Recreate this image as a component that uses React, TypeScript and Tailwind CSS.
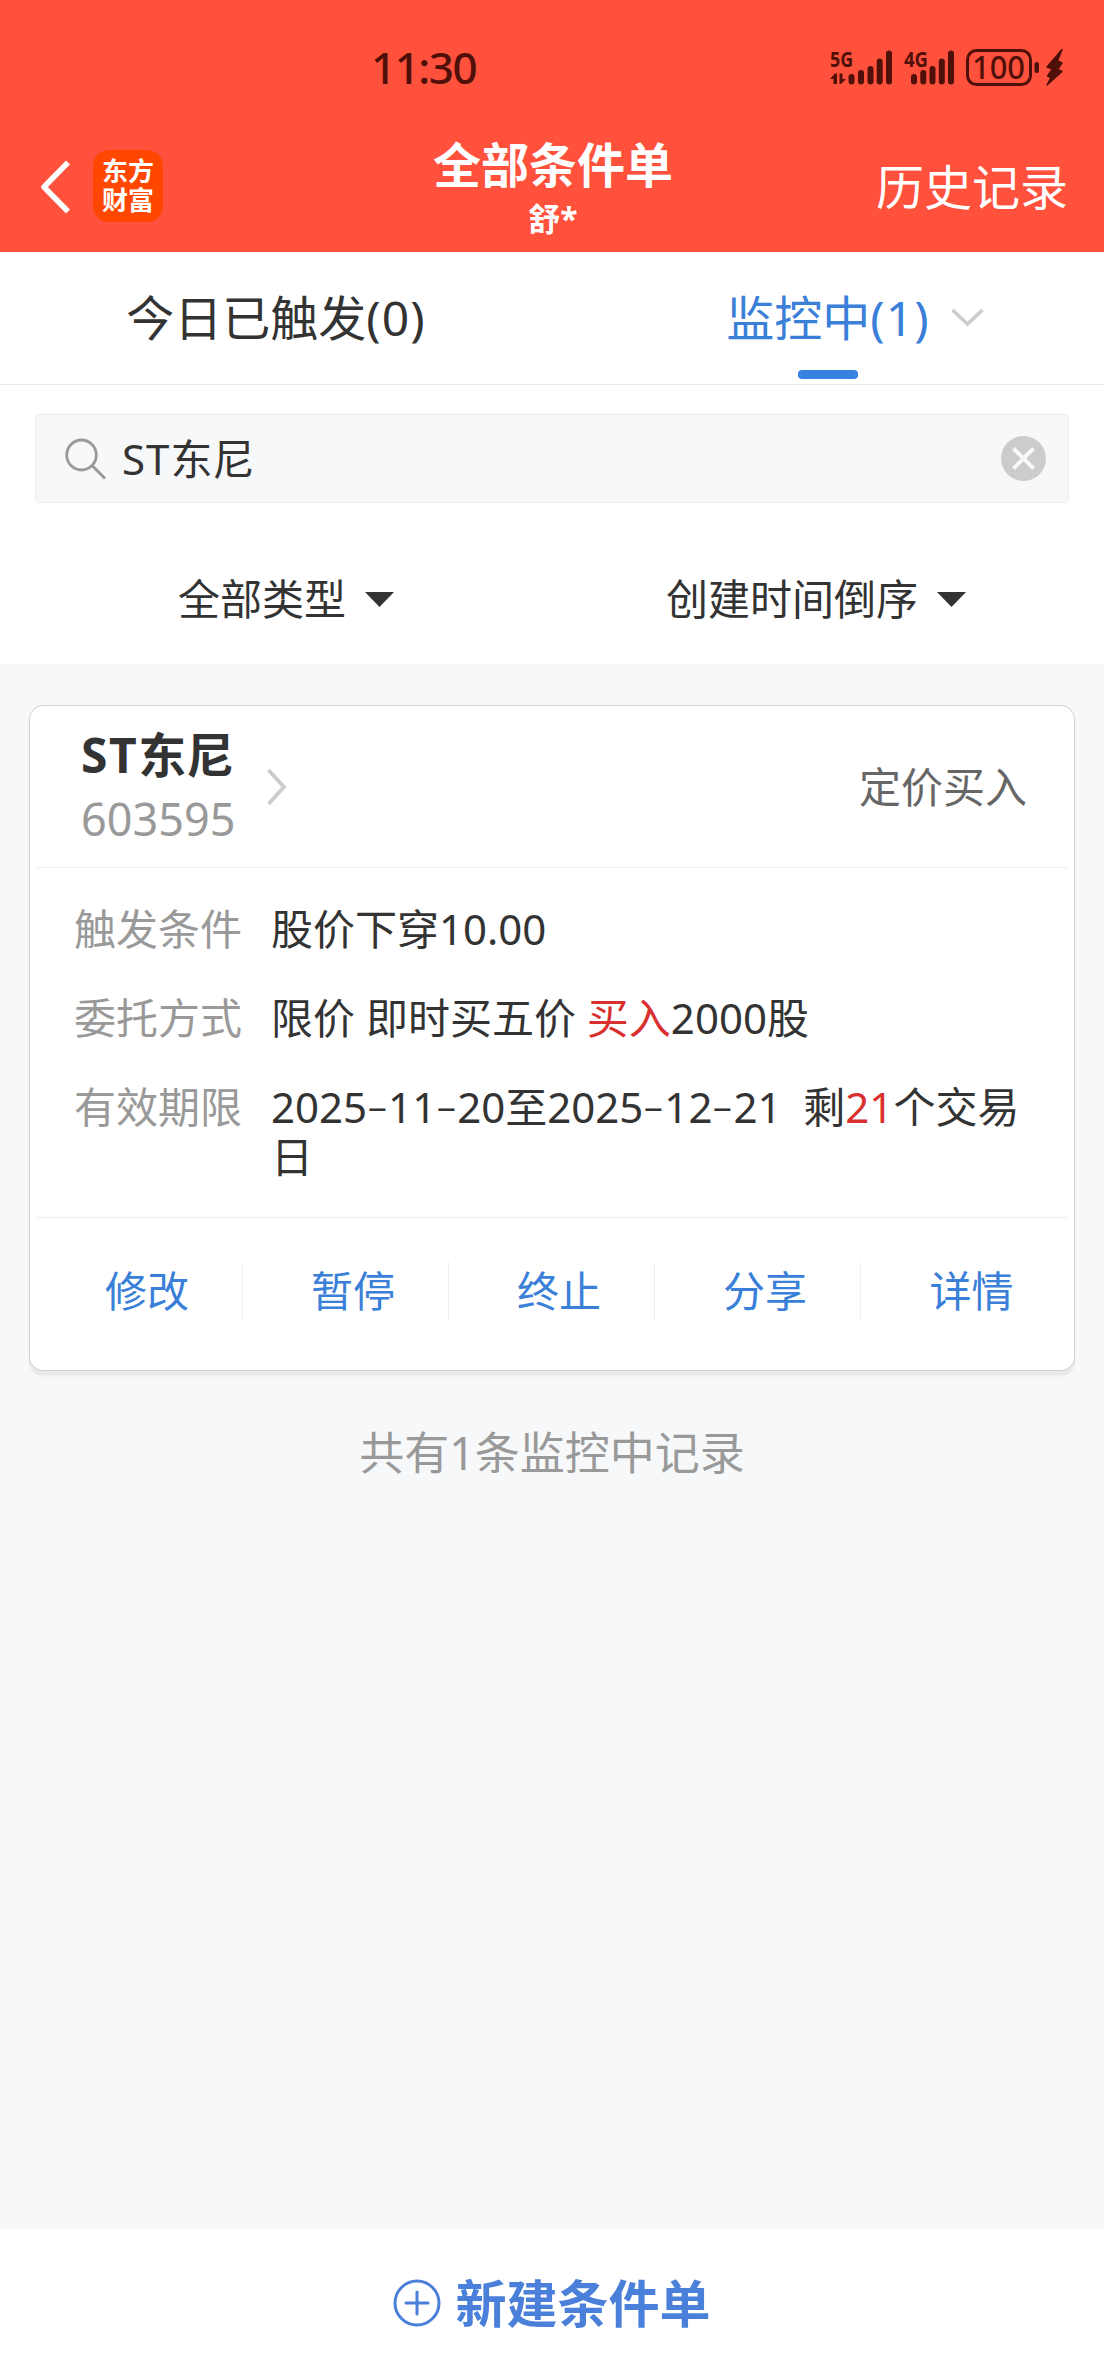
import { useState } from 'react';

const tabs = [
  { key: 'triggered', label: '今日已触发', count: 0 },
  { key: 'watching', label: '监控中', count: 1 },
];

const actions = ['修改', '暂停', '终止', '分享', '详情'];

function StatusIcons() {
  return (
    <svg className="w-[240px] h-[56px]" viewBox="828 40 240 56" fill="#4f1009">
      {/* 5G signal */}
      <text x="830" y="67" fontSize="22" fontWeight="700" textLength="23" lengthAdjust="spacingAndGlyphs">5G</text>
      <path d="M830 79 L835 73.5 H837 V84 H833.5 V79 Z M839.5 73.5 H842.5 V79 H846 L841 84 H839.5 Z" />
      <rect x="848.5" y="74" width="6" height="10.5" rx="3" />
      <rect x="858" y="70" width="6" height="14.5" rx="3" />
      <rect x="867.5" y="66" width="6" height="18.5" rx="3" />
      <rect x="876.7" y="58.5" width="6" height="26" rx="3" />
      <rect x="886" y="50.5" width="6" height="34" rx="3" />
      {/* 4G signal */}
      <text x="904" y="67" fontSize="22" fontWeight="700" textLength="24" lengthAdjust="spacingAndGlyphs">4G</text>
      <rect x="911" y="74" width="6" height="10.5" rx="3" />
      <rect x="920.3" y="70" width="6" height="14.5" rx="3" />
      <rect x="929.5" y="66" width="6" height="18.5" rx="3" />
      <rect x="938.8" y="58.5" width="6" height="26" rx="3" />
      <rect x="948" y="50.5" width="6" height="34" rx="3" />
      {/* battery */}
      <rect x="967.5" y="50.5" width="63" height="34" rx="9" fill="none" stroke="#4f1009" strokeWidth="3" />
      <text x="972" y="79" fontSize="32" fontWeight="500" textLength="53" lengthAdjust="spacingAndGlyphs">100</text>
      <rect x="1034.5" y="62" width="4.5" height="11" rx="2.2" />
      <path d="M1062 49.5 L1047 67 L1052.5 69 L1047.5 76 L1051 77.5 L1047 85 L1062 71.500 L1057.5 69.5 L1062 63 L1057.5 61 Z" stroke="#4f1009" strokeWidth="1.500" strokeLinejoin="round" />
    </svg>
  );
}

function Header() {
  return (
    <header className="h-[252px] bg-[#ff513c] text-white">
      <div className="h-[120px] flex items-start justify-between pl-[371px] pr-[36px] pt-[40px]">
        <span className="pt-[6px] text-[44px] leading-[42px] tracking-[-1.5px] font-medium text-[#4f1009]">11:30</span>
        <StatusIcons />
      </div>
      <div className="h-[132px] grid grid-cols-[1fr_auto_1fr] pl-[38px] pr-[36px]">
        <div className="flex items-start gap-[20px] pt-[30px]">
          <svg className="w-[35px] h-[74px]" viewBox="0 0 35 74" fill="none" stroke="#fff" strokeWidth="5.500">
            <path d="M30 12.500 L6 37 L30 61.500" strokeLinejoin="round" />
          </svg>
          <div className="w-[70px] h-[72px] rounded-[16px] bg-[#ff4700] pt-[7px] text-center text-[26px] leading-[29px] font-bold">
            <div>东方</div>
            <div>财富</div>
          </div>
        </div>
        <div className="text-center font-bold pt-[19px]">
          <h1 className="text-[48px] leading-[52px]">全部条件单</h1>
          <p className="text-[32px] leading-[36px] pt-[10px]">舒*</p>
        </div>
        <button className="self-start justify-self-end pt-[42px] text-[48px] leading-[50px]">历史记录</button>
      </div>
    </header>
  );
}

function Tabs() {
  const [active, setActive] = useState('watching');

  return (
    <nav className="h-[133px] grid grid-cols-2 border-b border-[#e9e9e9] bg-white">
      {tabs.map((tab) => (
        <button
          key={tab.key}
          onClick={() => setActive(tab.key)}
          className={`relative text-[48px] leading-[60px] pt-[36px] pb-[36px] ${
            active === tab.key ? 'text-[#3a7fd8]' : 'text-[#333]'
          }`}
        >
          {tab.label}
          <span className="tracking-[1px]">({tab.count})</span>
          {active === tab.key && (
            <span className="absolute left-1/2 -ml-[30px] bottom-[5px] w-[60px] h-[9px] rounded-[4px] bg-[#3582e2]" />
          )}
          {tab.key === 'watching' && (
            <svg className="absolute left-[399px] top-[56px] w-[33px] h-[20px]" viewBox="0 0 33 20" fill="none" stroke="#ccc" strokeWidth="3.500">
              <path d="M1.500 2 L16.500 16 L31.500 2" />
            </svg>
          )}
        </button>
      ))}
    </nav>
  );
}

function SearchBox() {
  return (
    <div className="mx-[35px] mt-[29px] h-[89px] flex items-center rounded-[5px] border border-[#ebebeb] bg-[#f7f8fa] pl-[28px] pr-[22px]">
      <svg className="w-[42px] h-[42px] mr-[16px]" viewBox="0 0 42 42" fill="none" stroke="#999" strokeWidth="2.800">
        <ellipse cx="17.500" cy="17" rx="14.800" ry="15" />
        <path d="M28 27.500 L41 40.500" />
      </svg>
      <span className="flex-1 text-[42px] leading-[60px]">
        <span className="tracking-[1px]">ST</span>东尼
      </span>
      <svg className="w-[45px] h-[45px]" viewBox="0 0 45 45">
        <circle cx="22.500" cy="22.500" r="22.500" fill="#ccc" />
        <path d="M12.500 12.500 L32.500 32.500 M32.500 12.500 L12.500 32.500" stroke="#f7f8fa" strokeWidth="4" />
      </svg>
    </div>
  );
}

function Caret() {
  return (
    <svg className="w-[29px] h-[15px]" viewBox="0 0 29 15" fill="#333">
      <path d="M0 0 H29 L14.500 15 Z" />
    </svg>
  );
}

function Filters() {
  return (
    <div className="h-[161px] grid grid-cols-2 pt-[31px] text-[42px] leading-[60px]">
      <button className="flex items-center pl-[178px] gap-[19px]">
        全部类型
        <Caret />
      </button>
      <button className="flex items-center pl-[114px] gap-[19px]">
        创建时间倒序
        <Caret />
      </button>
    </div>
  );
}

// dates use a wider dash than the body font has
function DateText({ value }: { value: string }) {
  return (
    <span className="whitespace-nowrap">
      {value.split('-').map((part, i) => (
        <span key={i}>
          {i > 0 && (
            <span className="inline-block w-[21px] text-center font-['Inter'] font-light scale-x-125">-</span>
          )}
          {part}
        </span>
      ))}
    </span>
  );
}

function OrderCard() {
  return (
    <section className="mx-[29px] h-[666px] rounded-[14px] border border-[#cfd0d2] bg-white px-[7px] shadow-[0_4px_1px_#e8e9eb,0_6px_3px_#f0f1f3]">
      <div className="h-[162px] flex items-center border-b border-[#eee]">
        <div className="pl-[44px]">
          <h2 className="text-[48px] leading-[64px] font-bold">
            <span className="tracking-[1.5px]">ST</span>东尼
          </h2>
          <p className="text-[45px] leading-[64px] text-[#999]">603595</p>
        </div>
        <svg className="ml-[31px] w-[22px] h-[38px]" viewBox="0 0 22 38" fill="none" stroke="#ccc" strokeWidth="3.800">
          <path d="M2.500 2 L18 19 L2.500 36" />
        </svg>
        <span className="ml-auto pr-[40px] text-[42px] leading-[60px] text-[#666]">定价买入</span>
      </div>

      <dl className="h-[350px] border-b border-[#eee] pl-[37px] pt-[36px] grid grid-cols-[197px_1fr] content-start gap-y-[40px] text-[42px] leading-[49px]">
        <dt className="text-[#999]">触发条件</dt>
        <dd>股价下穿10.00</dd>
        <dt className="text-[#999]">委托方式</dt>
        <dd>
          限价 即时买五价 <span className="text-[#d9302f]">买入</span>2000股
        </dd>
        <dt className="text-[#999]">有效期限</dt>
        <dd className="pr-[20px]">
          <DateText value="2025-11-20" />至<DateText value="2025-12-21" />&nbsp; 剩
          <span className="text-[#d9302f]">21</span>个交易日
        </dd>
      </dl>

      <div className="grid grid-cols-5 pt-[44px]">
        {actions.map((action) => (
          <button
            key={action}
            className="h-[58px] pl-[15px] border-r border-[#eee] last:border-r-0 text-[42px] leading-[58px] text-[#3a7fd8]"
          >
            {action}
          </button>
        ))}
      </div>
    </section>
  );
}

export default function App() {
  return (
    <div className="w-[1104px] h-[2376px] flex flex-col overflow-hidden bg-[#f7f8fa] text-[#333] font-['Noto_Sans','Noto_Sans_CJK_SC',sans-serif]">
      <Header />
      <div className="bg-white">
        <Tabs />
        <SearchBox />
        <Filters />
      </div>

      <main className="flex-1 pt-[41px]">
        <OrderCard />
        <p className="pt-[52px] text-center text-[45px] leading-[60px] text-[#999]">共有1条监控中记录</p>
      </main>

      <footer className="h-[147px] bg-white">
        <button className="w-full h-full flex items-center justify-center gap-[14px] text-[51px] leading-[60px] font-bold text-[#4a80da]">
          <svg className="w-[48px] h-[48px]" viewBox="0 0 48 48" fill="none" stroke="#4a80da" strokeWidth="3">
            <circle cx="24" cy="24" r="22" />
            <path d="M24 13 V35 M13 24 H35" strokeLinecap="round" />
          </svg>
          新建条件单
        </button>
      </footer>
    </div>
  );
}
